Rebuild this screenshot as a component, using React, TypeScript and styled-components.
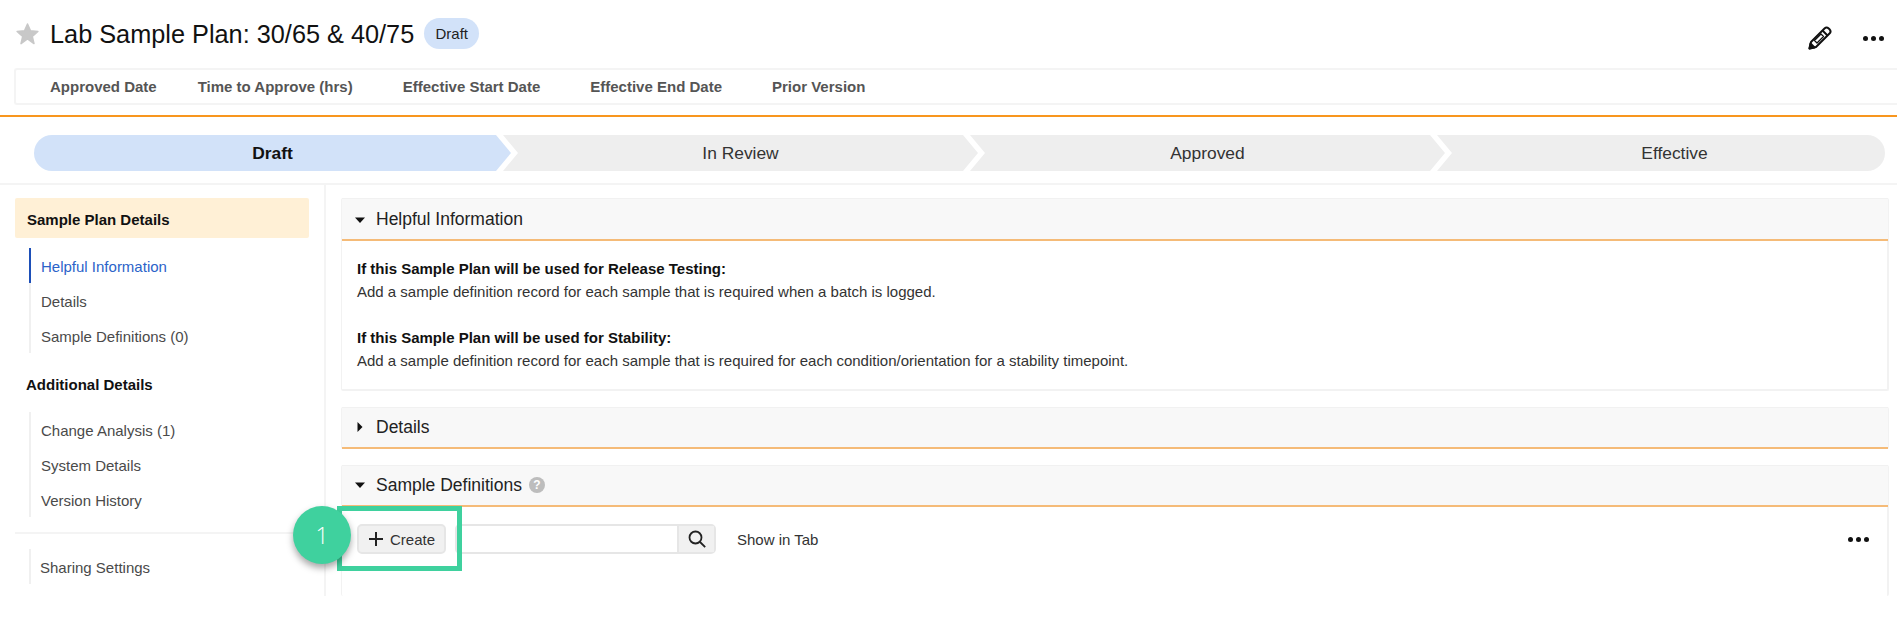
import React from "react";
import styled, { createGlobalStyle } from "styled-components";

const Global = createGlobalStyle`
  html, body { margin: 0; padding: 0; background: #fff; }
  body { font-family: "Liberation Sans", Arial, sans-serif; color: #1b1b1b; }
`;

const Page = styled.div`
  width: 1897px;
  height: 626px;
  overflow: hidden;
  background: #fff;
`;

const TitleRow = styled.header`
  height: 68px;
  box-sizing: border-box;
  padding: 18px 13px 0 15px;
  display: flex;
  align-items: flex-start;
`;

const StarIcon = styled.svg`
  width: 25px;
  height: 24px;
  margin-top: 4px;
  fill: #c8c8c8;
  stroke: #c8c8c8;
  stroke-width: 1.5;
  stroke-linejoin: round;
`;

const Title = styled.h1`
  margin: 0 0 0 10px;
  font-size: 25.3px;
  font-weight: 400;
  line-height: 32px;
  color: #111;
`;

const Badge = styled.span`
  margin-left: 10px;
  height: 31px;
  width: 55px;
  border-radius: 16px;
  background: #d2e2f9;
  font-size: 15px;
  line-height: 31px;
  text-align: center;
  color: #222;
`;

const Actions = styled.div`
  margin-left: auto;
  display: flex;
  align-items: center;
  gap: 31px;
  padding-top: 8px;
`;

const PencilIcon = styled.svg`
  width: 24px;
  height: 24px;
  display: block;
`;

const Dots = styled.div`
  display: flex;
  gap: 3px;
`;

const Dot = styled.i`
  width: 5px;
  height: 5px;
  border-radius: 50%;
  background: #111;
  display: block;
`;

const FieldBar = styled.div`
  height: 37px;
  box-sizing: border-box;
  margin-left: 14px;
  border: 2px solid #f4f4f4;
  border-right: 0;
  border-radius: 3px 0 0 3px;
  padding-left: 34px;
  display: flex;
  align-items: center;
`;

const FieldLabel = styled.span<{ $after: number }>`
  margin-right: ${(p) => p.$after}px;
  font-size: 15px;
  font-weight: 700;
  color: #555;
`;

const Accent = styled.div`
  height: 2px;
  margin-top: 10px;
  background: #f8961e;
`;

const Stepper = styled.div`
  display: grid;
  grid-template-columns: 477px 467px 467px 440px;
  margin: 18px 0 0 34px;
`;

const Step = styled.div<{ $pos: "first" | "mid" | "last"; $active?: boolean }>`
  height: 36px;
  box-sizing: border-box;
  line-height: 36px;
  text-align: center;
  font-size: 17.4px;
  margin-left: ${(p) => (p.$pos === "first" ? "0" : "-8px")};
  background: ${(p) => (p.$active ? "#d2e2f9" : "#eeeeee")};
  font-weight: ${(p) => (p.$active ? 700 : 400)};
  color: ${(p) => (p.$active ? "#111" : "#333")};
  padding-left: ${(p) => (p.$pos === "last" ? "27px" : "0")};
  border-radius: ${(p) =>
    p.$pos === "first" ? "18px 0 0 18px" : p.$pos === "last" ? "0 18px 18px 0" : "0"};
  clip-path: ${(p) =>
    p.$pos === "first"
      ? "polygon(0 0, calc(100% - 15px) 0, 100% 50%, calc(100% - 15px) 100%, 0 100%)"
      : p.$pos === "last"
        ? "polygon(0 0, 100% 0, 100% 100%, 0 100%, 15px 50%)"
        : "polygon(0 0, calc(100% - 15px) 0, 100% 50%, calc(100% - 15px) 100%, 0 100%, 15px 50%)"};
`;

const Columns = styled.div`
  margin-top: 12px;
  height: 413px;
  border-top: 2px solid #f4f4f4;
  box-sizing: border-box;
  display: flex;
`;

const Sidebar = styled.nav`
  width: 326px;
  box-sizing: border-box;
  border-right: 2px solid #f4f4f4;
  padding: 13px 15px 0;
  flex: none;
`;

const SideHeader = styled.div`
  height: 40px;
  box-sizing: border-box;
  padding-left: 12px;
  border-radius: 2px;
  background: #fff0d6;
  font-size: 15px;
  font-weight: 700;
  line-height: 43px;
  color: #111;
`;

const SideTitle = styled.div`
  height: 33px;
  margin: 14px 0 0 11px;
  font-size: 15px;
  font-weight: 700;
  line-height: 35px;
  color: #111;
`;

const NavGroup = styled.div<{ $top: number }>`
  margin: ${(p) => p.$top}px 0 0 14px;
  border-left: 2px solid #f0f0f0;
`;

const NavItem = styled.div<{ $active?: boolean; $inset?: number }>`
  height: 35px;
  line-height: 37px;
  padding-left: ${(p) => p.$inset ?? 10}px;
  margin-left: -2px;
  font-size: 15px;
  border-left: 2px solid ${(p) => (p.$active ? "#1d4fb8" : "transparent")};
  color: ${(p) => (p.$active ? "#2b63c9" : "#4a4a4a")};
`;

const SideRule = styled.hr`
  margin: 15px 0 0;
  border: 0;
  border-top: 2px solid #f4f4f4;
`;

const Main = styled.main`
  flex: 1;
  box-sizing: border-box;
  padding: 13px 8px 0 15px;
  min-width: 0;
`;

const Panel = styled.section<{ $height?: number; $closed?: boolean }>`
  box-sizing: border-box;
  border: 1px solid #f2f2f2;
  border-width: 0 2px 2px 1px;
  border-radius: 2px;
  margin-bottom: 16px;
  ${(p) => (p.$closed ? "border-bottom: 0;" : "")}
  ${(p) => (p.$height ? `border-bottom: 0; height: ${p.$height}px;` : "")}
`;

const PanelHead = styled.div<{ $tall?: boolean }>`
  height: ${(p) => (p.$tall ? 43 : 42)}px;
  box-sizing: border-box;
  background: #f8f8f8;
  border-bottom: 2px solid #f5bb78;
  box-shadow: inset 0 1px 0 #f1f1f1;
  display: flex;
  align-items: center;
  padding: ${(p) => (p.$tall ? "2px" : "0")} 0 0 12px;
  margin-right: -1px;
`;

const Caret = styled.svg`
  width: 12px;
  height: 12px;
  fill: #111;
  flex: none;
`;

const PanelTitle = styled.h2`
  margin: 0 0 0 10px;
  font-size: 17.5px;
  font-weight: 400;
  color: #222;
`;

const HelpIcon = styled.span`
  margin-left: 7px;
  width: 16px;
  height: 16px;
  border-radius: 50%;
  background: #bdbdbd;
  color: #fff;
  font-size: 12px;
  font-weight: 700;
  line-height: 16px;
  text-align: center;
`;

const PanelBody = styled.div`
  padding: 16px 15px 17px;
  font-size: 15px;
  line-height: 23px;
  color: #333;
`;

const Para = styled.p`
  margin: 0 0 23px;
  &:last-child { margin-bottom: 0; }
`;

const Strong = styled.strong`
  display: block;
  color: #111;
`;

const Toolbar = styled.div`
  position: relative;
  display: flex;
  align-items: center;
  padding: 17px 0 0 15px;
`;

const CreateButton = styled.button`
  width: 89px;
  height: 30px;
  box-sizing: border-box;
  padding: 0 0 0 10px;
  border: 2px solid #e6e6e6;
  border-radius: 5px;
  background: #f1f1f1;
  display: flex;
  align-items: center;
  gap: 7px;
  font: 15px "Liberation Sans", Arial, sans-serif;
  color: #333;
`;

const SearchBox = styled.div`
  margin-left: 9px;
  width: 261px;
  height: 30px;
  box-sizing: border-box;
  border: 2px solid #e6e6e6;
  border-radius: 5px;
  display: flex;
  justify-content: flex-end;
`;

const SearchButton = styled.div`
  width: 35px;
  background: #f1f1f1;
  border-left: 2px solid #e6e6e6;
  display: flex;
  align-items: center;
  justify-content: center;
`;

const ShowInTab = styled.span`
  margin-left: 21px;
  font-size: 15px;
  color: #333;
`;

const ToolbarDots = styled.div`
  margin-left: auto;
  margin-right: 18px;
`;

const CalloutFrame = styled.div`
  position: absolute;
  left: -5px;
  top: -1px;
  width: 125px;
  height: 65px;
  box-sizing: border-box;
  border: 5px solid #3fd19e;
`;

const CalloutBadge = styled.div`
  position: absolute;
  left: -49px;
  top: -1px;
  width: 58px;
  height: 58px;
  border-radius: 50%;
  background: #3fd19e;
  color: #fff;
  font-family: "Open Sans", sans-serif;
  font-weight: 300;
  font-size: 23px;
  line-height: 58px;
  text-align: center;
  box-shadow: 0 4px 7px rgba(0, 0, 0, 0.35);
`;

const steps: { label: string; pos: "first" | "mid" | "last"; active?: boolean }[] = [
  { label: "Draft", pos: "first", active: true },
  { label: "In Review", pos: "mid" },
  { label: "Approved", pos: "mid" },
  { label: "Effective", pos: "last" },
];

const fields = [
  { label: "Approved Date", after: 41 },
  { label: "Time to Approve (hrs)", after: 50 },
  { label: "Effective Start Date", after: 50 },
  { label: "Effective End Date", after: 50 },
  { label: "Prior Version", after: 0 },
];

const ThreeDots = () => (
  <Dots>
    <Dot />
    <Dot />
    <Dot />
  </Dots>
);

const CaretDown = () => (
  <Caret viewBox="0 0 12 12">
    <path d="M1 3.5h10L6 9z" />
  </Caret>
);

const CaretRight = () => (
  <Caret viewBox="0 0 12 12">
    <path d="M3.5 1v10L8.5 6z" />
  </Caret>
);

export default function App() {
  return (
    <Page>
      <Global />
      <TitleRow>
        <StarIcon viewBox="0 0 24 24">
          <path d="M12 2l3 6.8 7.4.7-5.6 4.9 1.7 7.2L12 17l-6.5 4.6 1.7-7.2L1.6 9.5 9 8.8z" />
        </StarIcon>
        <Title>Lab Sample Plan: 30/65 &amp; 40/75</Title>
        <Badge>Draft</Badge>
        <Actions>
          <PencilIcon viewBox="0 0 24 24" fill="none" stroke="#111" strokeWidth="2" strokeLinejoin="round">
            <path d="M16.5 2.5a3 3 0 0 1 4.2 0l.8.8a3 3 0 0 1 0 4.2L8 21l-6.5 1.5L3 16z" />
            <path d="M14.5 4.5l5 5" />
            <path d="M6.5 14.5l6.5-6.5 2.5 2.5-6.5 6.5z" strokeWidth="1.3" />
            <path d="M1.5 22.5L2.5 17.5l4 4z" fill="#111" />
          </PencilIcon>
          <ThreeDots />
        </Actions>
      </TitleRow>

      <FieldBar>
        {fields.map((f) => (
          <FieldLabel key={f.label} $after={f.after}>
            {f.label}
          </FieldLabel>
        ))}
      </FieldBar>

      <Accent />

      <Stepper>
        {steps.map((s) => (
          <Step key={s.label} $pos={s.pos} $active={s.active}>
            {s.label}
          </Step>
        ))}
      </Stepper>

      <Columns>
        <Sidebar>
          <SideHeader>Sample Plan Details</SideHeader>
          <NavGroup $top={10}>
            <NavItem $active>Helpful Information</NavItem>
            <NavItem>Details</NavItem>
            <NavItem>Sample Definitions (0)</NavItem>
          </NavGroup>
          <SideTitle>Additional Details</SideTitle>
          <NavGroup $top={12}>
            <NavItem>Change Analysis (1)</NavItem>
            <NavItem>System Details</NavItem>
            <NavItem>Version History</NavItem>
          </NavGroup>
          <SideRule />
          <NavGroup $top={15}>
            <NavItem $inset={9}>Sharing Settings</NavItem>
          </NavGroup>
        </Sidebar>

        <Main>
          <Panel>
            <PanelHead $tall>
              <CaretDown />
              <PanelTitle>Helpful Information</PanelTitle>
            </PanelHead>
            <PanelBody>
              <Para>
                <Strong>If this Sample Plan will be used for Release Testing:</Strong>
                Add a sample definition record for each sample that is required when a batch is logged.
              </Para>
              <Para>
                <Strong>If this Sample Plan will be used for Stability:</Strong>
                Add a sample definition record for each sample that is required for each condition/orientation for a stability timepoint.
              </Para>
            </PanelBody>
          </Panel>

          <Panel $closed>
            <PanelHead>
              <CaretRight />
              <PanelTitle>Details</PanelTitle>
            </PanelHead>
          </Panel>

          <Panel $height={131}>
            <PanelHead>
              <CaretDown />
              <PanelTitle>Sample Definitions</PanelTitle>
              <HelpIcon>?</HelpIcon>
            </PanelHead>
            <Toolbar>
              <CreateButton>
                <svg width="14" height="14" viewBox="0 0 14 14" stroke="#222" strokeWidth="2">
                  <path d="M7 0v14M0 7h14" />
                </svg>
                Create
              </CreateButton>
              <SearchBox>
                <SearchButton>
                  <svg width="18" height="18" viewBox="0 0 18 18" fill="none" stroke="#222" strokeWidth="1.8">
                    <circle cx="7.5" cy="7.5" r="6" />
                    <path d="M12 12l5.2 5.2" />
                  </svg>
                </SearchButton>
              </SearchBox>
              <ShowInTab>Show in Tab</ShowInTab>
              <ToolbarDots>
                <ThreeDots />
              </ToolbarDots>
              <CalloutFrame />
              <CalloutBadge>1</CalloutBadge>
            </Toolbar>
          </Panel>
        </Main>
      </Columns>
    </Page>
  );
}
